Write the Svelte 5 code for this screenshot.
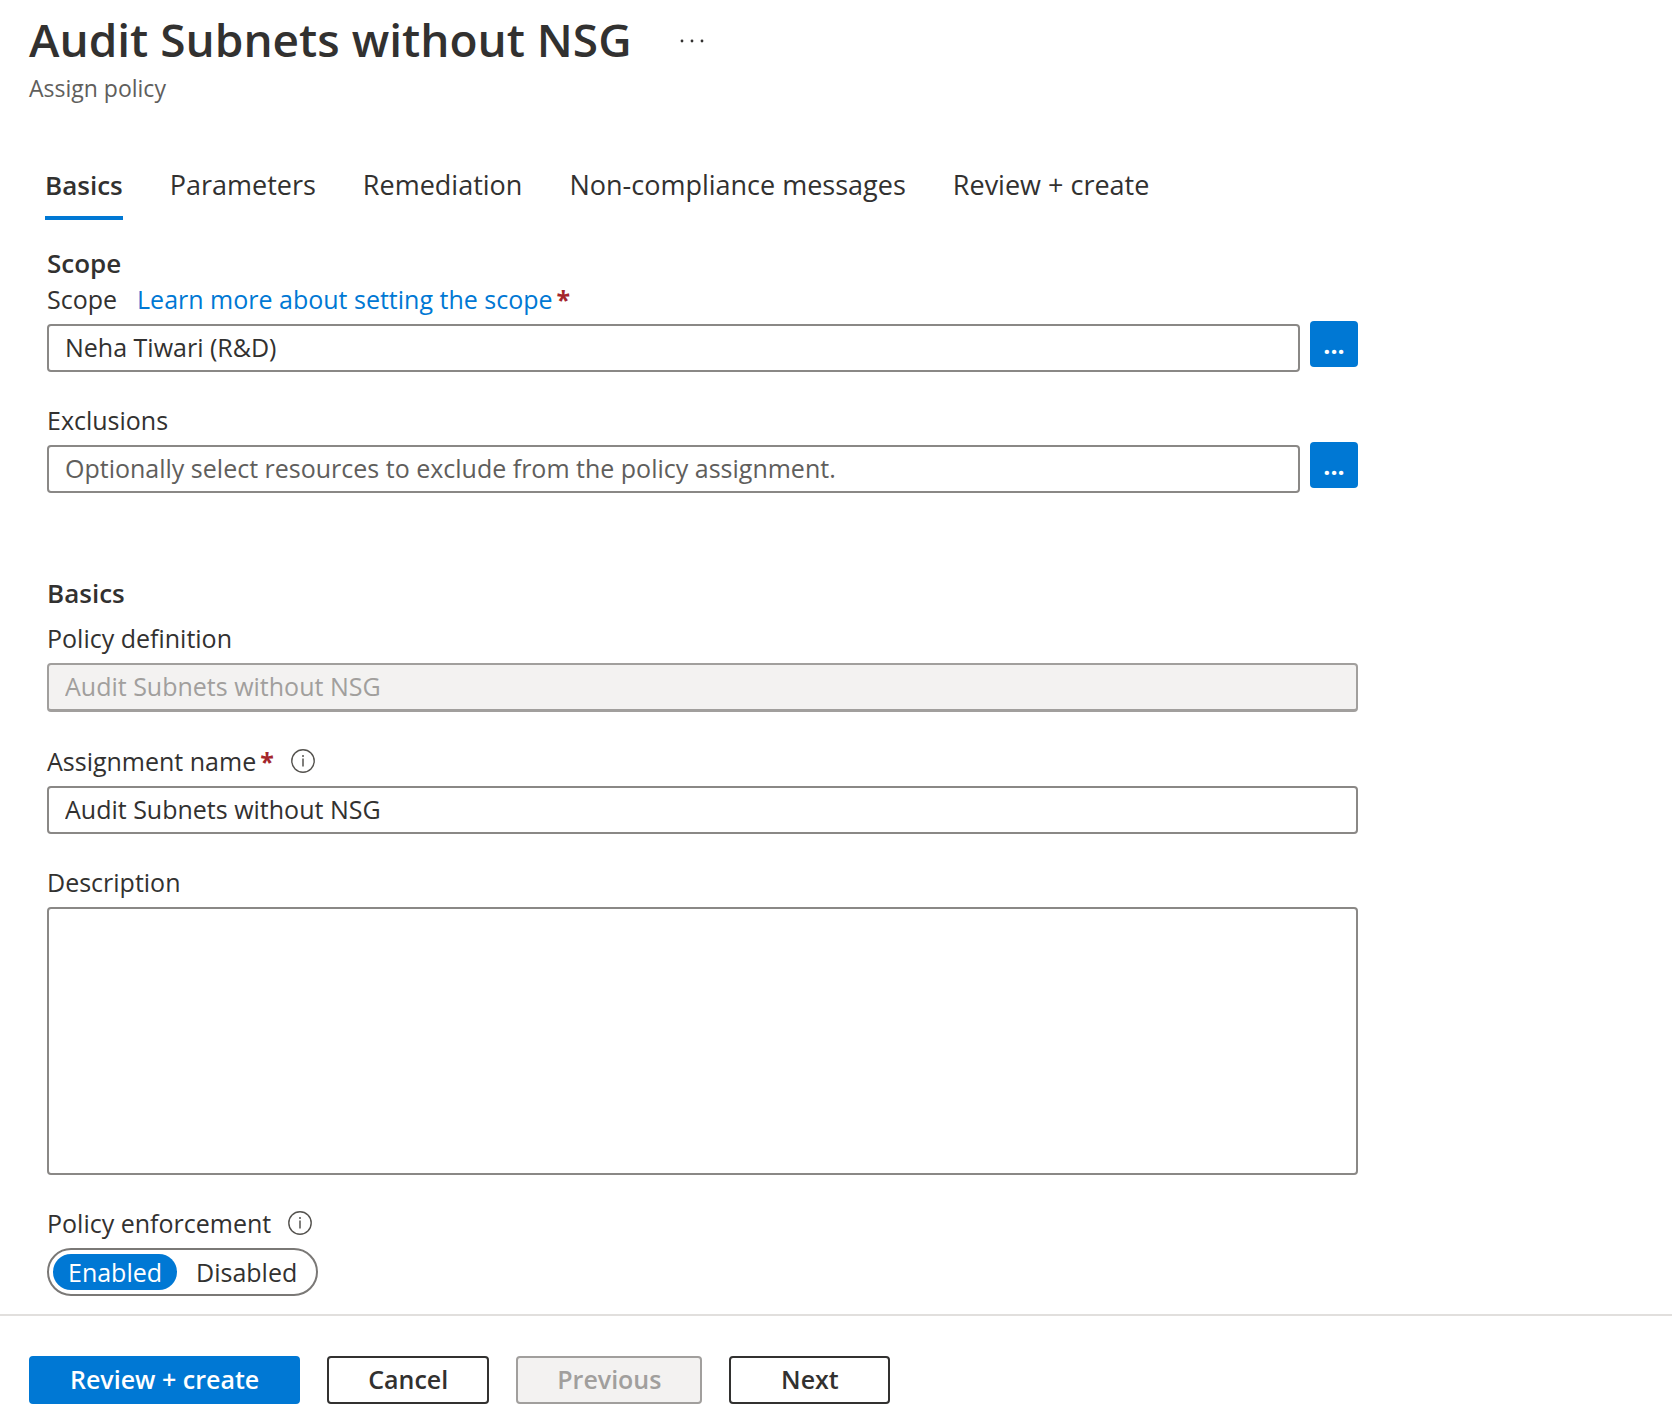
<script>
  const tabs = ['Basics', 'Parameters', 'Remediation', 'Non-compliance messages', 'Review + create'];
  let activeTab = $state('Basics');
  let scope = $state('Neha Tiwari (R&D)');
  let exclusions = $state('');
  let assignmentName = $state('Audit Subnets without NSG');
  let description = $state('');
  let enforcement = $state('Enabled');
</script>

{#snippet info(label)}
  <button type="button" class="info" aria-label={label}>
    <svg viewBox="0 0 24 24" width="24" height="24" fill="none" aria-hidden="true">
      <circle cx="12" cy="12" r="11.2" stroke="#55534f" stroke-width="1.4" />
      <path d="M12 9.4v8" stroke="#55534f" stroke-width="1.5" />
      <circle cx="12" cy="7" r="1" fill="#55534f" />
    </svg>
  </button>
{/snippet}

{#snippet asterisk()}
  <span class="required">*</span>
{/snippet}

<div class="page">
  <header>
    <div class="title-row">
      <h1>Audit Subnets without NSG</h1>
      <button type="button" class="more" aria-label="More actions">
        <svg viewBox="0 0 24 4" width="24" height="4" fill="#323130" aria-hidden="true">
          <circle cx="2" cy="2" r="1.4" />
          <circle cx="12" cy="2" r="1.4" />
          <circle cx="22" cy="2" r="1.4" />
        </svg>
      </button>
    </div>
    <p class="subtitle">Assign policy</p>
  </header>

  <main>
    <div class="tabs" role="tablist">
      {#each tabs as tab}
        <button
          type="button"
          role="tab"
          class="tab"
          class:active={tab === activeTab}
          aria-selected={tab === activeTab}
          onclick={() => (activeTab = tab)}>{tab}</button>
      {/each}
    </div>

    <section class="scope">
      <h2>Scope</h2>
      <div class="field">
        <div class="label-row">
          <label for="scope">Scope</label>
          <a class="learn" href="#scope">Learn more about setting the scope</a>
          {@render asterisk()}
        </div>
        <div class="picker">
          <input id="scope" type="text" bind:value={scope} />
          <button type="button" class="browse" aria-label="Select scope">...</button>
        </div>
      </div>
      <div class="field">
        <div class="label-row"><label for="exclusions">Exclusions</label></div>
        <div class="picker">
          <input
            id="exclusions"
            type="text"
            placeholder="Optionally select resources to exclude from the policy assignment."
            bind:value={exclusions} />
          <button type="button" class="browse" aria-label="Select exclusions">...</button>
        </div>
      </div>
    </section>

    <section class="basics">
      <h2>Basics</h2>
      <div class="field">
        <div class="label-row"><label for="definition">Policy definition</label></div>
        <input id="definition" type="text" value="Audit Subnets without NSG" disabled />
      </div>
      <div class="field">
        <div class="label-row">
          <label for="name">Assignment name</label>
          {@render asterisk()}
          {@render info('About assignment name')}
        </div>
        <input id="name" type="text" bind:value={assignmentName} />
      </div>
      <div class="field">
        <div class="label-row"><label for="description">Description</label></div>
        <textarea id="description" bind:value={description}></textarea>
      </div>
      <div class="field">
        <div class="label-row">
          <span id="enforcement-label">Policy enforcement</span>
          {@render info('About policy enforcement')}
        </div>
        <div class="toggle" role="radiogroup" aria-labelledby="enforcement-label">
          {#each ['Enabled', 'Disabled'] as option}
            <label class="option" class:selected={enforcement === option}>
              <input type="radio" name="enforcement" value={option} bind:group={enforcement} />
              {option}
            </label>
          {/each}
        </div>
      </div>
    </section>
  </main>

  <footer>
    <button type="button" class="action primary">Review + create</button>
    <button type="button" class="action">Cancel</button>
    <button type="button" class="action" disabled>Previous</button>
    <button type="button" class="action">Next</button>
  </footer>
</div>

<style>
  :global(body) {
    margin: 0;
    background: #fff;
  }

  .page {
    display: flex;
    flex-direction: column;
    min-height: 100vh;
    box-sizing: border-box;
    color: #323130;
    font-family: 'Segoe UI', 'Open Sans', 'Noto Sans', sans-serif;
    font-size: 25px;
    line-height: 34px;
  }

  button,
  input,
  textarea {
    font: inherit;
    color: inherit;
    box-sizing: border-box;
    margin: 0;
  }

  button {
    padding: 0;
    border: 0;
    background: none;
    cursor: pointer;
  }

  h1,
  h2,
  p {
    margin: 0;
  }

  header {
    padding: 9px 29px 0;
  }

  .title-row {
    display: flex;
    align-items: center;
    gap: 48px;
  }

  h1 {
    font-size: 46px;
    line-height: 60px;
    font-weight: 600;
  }

  .more {
    display: flex;
    padding: 12px 0 8px;
  }

  .subtitle {
    margin-top: 3px;
    font-size: 23px;
    line-height: 32px;
    color: #605e5c;
  }

  main {
    flex: 1;
    max-width: 1311px;
    padding: 62px 47px 18px;
  }

  .tabs {
    display: flex;
    gap: 47px;
    margin: 0 -2px 24px;
  }

  .tab {
    padding-bottom: 12px;
    border-bottom: 4px solid transparent;
    font-size: 27px;
    line-height: 38px;
    white-space: nowrap;
  }

  .tab.active {
    border-color: #0078d4;
    font-size: 26px;
    font-weight: 600;
  }

  section {
    display: flex;
    flex-direction: column;
  }

  .scope {
    margin-bottom: 81px;
  }

  .field + .field {
    margin-top: 31px;
  }

  h2 {
    font-size: 26px;
    line-height: 38px;
    font-weight: 600;
  }

  .basics h2 {
    margin-bottom: 9px;
  }

  .field {
    display: flex;
    flex-direction: column;
    gap: 8px;
  }

  .label-row {
    display: flex;
    align-items: center;
    height: 34px;
  }

  .learn {
    margin-left: 20px;
    color: #0078d4;
    text-decoration: none;
  }

  .required {
    margin-left: 4px;
    color: #a4262c;
    font-weight: 700;
  }

  .info {
    display: flex;
    margin-left: 17px;
  }

  .picker {
    display: flex;
    align-items: flex-start;
    gap: 10px;
  }

  input[type='text'],
  textarea {
    display: block;
    width: 100%;
    border: 2px solid #8a8886;
    border-radius: 4px;
    background: #fff;
    outline: 0;
  }

  input[type='text'] {
    height: 48px;
    padding: 0 16px 2px;
  }

  input::placeholder {
    color: #605e5c;
    opacity: 1;
  }

  input[type='text']:disabled {
    height: 49px;
    margin-bottom: 1px;
    border-color: #a19f9d;
    border-bottom-width: 3px;
    background: #f3f2f1;
    color: #a19f9d;
  }

  textarea {
    height: 268px;
    padding: 6px 16px;
    resize: none;
  }

  .browse {
    flex: none;
    width: 48px;
    height: 46px;
    margin-top: -3px;
    border-radius: 4px;
    background: #0078d4;
    color: #fff;
    font-weight: 700;
  }

  .toggle {
    display: flex;
    gap: 4px;
    align-self: flex-start;
    box-sizing: border-box;
    height: 48px;
    padding: 4px;
    border: 2px solid #7a7876;
    border-radius: 24px;
  }

  .option {
    position: relative;
    padding: 0 15px;
    border-radius: 18px;
    line-height: 36px;
    cursor: pointer;
  }

  .option.selected {
    background: #0078d4;
    color: #fff;
  }

  .option input {
    position: absolute;
    opacity: 0;
    pointer-events: none;
  }

  footer {
    display: flex;
    flex-wrap: wrap;
    gap: 27px;
    padding: 40px 29px 12px;
    border-top: 2px solid #e1dfdd;
  }

  .action {
    min-width: 161px;
    height: 48px;
    padding: 0 39px 2px;
    border: 2px solid #323130;
    border-radius: 4px;
    background: #fff;
    font-weight: 600;
  }

  .action.primary {
    border-color: #0078d4;
    background: #0078d4;
    color: #fff;
  }

  .action:disabled {
    border-color: #a19f9d;
    background: #f3f2f1;
    color: #a19f9d;
  }
</style>
